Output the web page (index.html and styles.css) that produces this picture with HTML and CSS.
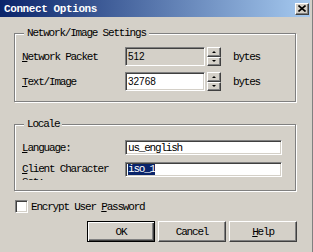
FILE: index.html
```html
<!DOCTYPE html>
<html lang="en">
<head>
  <meta charset="UTF-8" />
  <title>Connect Options</title>
  <link rel="stylesheet" href="styles.css">
</head>
<body>

  <div class="window">
    <div class="titlebar">
      <span class="title">Connect Options</span>
      <span class="close">
        <svg width="8" height="7" viewBox="0 0 8 7"><path d="M0.5 0.5 L7.5 6.5 M7.5 0.5 L0.5 6.5" stroke="#000" stroke-width="1.6" fill="none"/></svg>
      </span>
    </div>

    <div class="content">
      <!-- Network / image -->
      <div class="group net">
        <span class="legend">Network/Image Settings</span>
        <div class="row">
          <span class="label"><u>N</u>etwork Packet</span>
          <div class="field short readonly num">512</div>
          <div class="spin">
            <div class="spin-btn"><span class="arrow up"></span></div>
            <div class="spin-btn"><span class="arrow down"></span></div>
          </div>
          <span class="unit">bytes</span>
        </div>
        <div class="row">
          <span class="label"><u>T</u>ext/Image</span>
          <div class="field short num">32768</div>
          <div class="spin">
            <div class="spin-btn"><span class="arrow up"></span></div>
            <div class="spin-btn"><span class="arrow down"></span></div>
          </div>
          <span class="unit">bytes</span>
        </div>
      </div>

      <!-- Locale -->
      <div class="group locale">
        <span class="legend">Locale</span>
        <div class="row">
          <span class="label"><u>L</u>anguage:</span>
          <div class="field long">us_english</div>
        </div>
        <div class="row top">
          <span class="label wrap"><u>C</u>lient Character Set:</span>
          <div class="field long"><span class="sel">iso_1</span></div>
        </div>
      </div>

      <div class="check">
        <span class="box"></span>
        <span>Encrypt User <u>P</u>assword</span>
      </div>

      <div class="buttons">
        <a href="#" class="btn default">OK</a>
        <a href="#" class="btn">Cancel</a>
        <a href="#" class="btn"><u>H</u>elp</a>
      </div>
    </div>
  </div>

</body>
</html>
```

FILE: styles.css
```css
body {
  margin: 0;
  background: #d4d0c8;
  font-family: "Liberation Mono", monospace;
  font-size: 11px;
  letter-spacing: -1.2px;
  color: #000;
}

.window {
  width: 310px;
  height: 252px;
  border-right: 2px solid #d4d0c8;
  box-shadow: 1px 0 0 #808080;
}

.titlebar {
  height: 17px;
  background: linear-gradient(to right, #0a246a, #a6caf0);
  display: flex;
  align-items: center;
  justify-content: space-between;
  padding: 0 1px 0 4px;
}

.title {
  color: #fff;
  font-weight: bold;
  letter-spacing: -0.4px;
}

.close {
  box-sizing: border-box;
  width: 14px;
  height: 12px;
  background: #d4d0c8;
  border: 1px solid;
  border-color: #fff #404040 #404040 #fff;
  box-shadow: inset -1px -1px 0 #808080;
  display: flex;
  align-items: center;
  justify-content: center;
}

.content {
  padding: 16px 0 0 14px;
}

.group {
  position: relative;
  box-sizing: border-box;
  width: 282px;
  border: 1px solid #808080;
  box-shadow: inset 1px 1px 0 #fff, 1px 1px 0 #fff;
}

.net {
  height: 69px;
  padding: 13px 0 0 7px;
}

.locale {
  margin-top: 22px;
  height: 67px;
  padding: 15px 0 0 7px;
}

.legend {
  position: absolute;
  top: -7px;
  left: 9px;
  padding: 0 3px;
  line-height: 12px;
  background: #d4d0c8;
}

.row {
  display: flex;
  align-items: center;
  height: 19px;
}

.row + .row {
  margin-top: 6px;
}

.locale .row {
  height: 15px;
}

.locale .row + .row {
  margin-top: 7px;
}

.row.top {
  align-items: flex-start;
}

.label {
  width: 103px;
  flex-shrink: 0;
}

/* second line is clipped, as in the real dialog */
.label.wrap {
  margin-top: 1px;
  height: 17px;
  line-height: 13px;
  overflow: hidden;
}

.field {
  box-sizing: border-box;
  height: 19px;
  background: #fff;
  border: 1px solid;
  border-color: #808080 #fff #fff #808080;
  box-shadow: inset 1px 1px 0 #404040, inset -1px -1px 0 #d4d0c8;
  padding: 0 2px;
  display: flex;
  align-items: center;
}

.field.short {
  width: 80px;
}

.field.long {
  width: 157px;
  height: 15px;
}

.readonly {
  background: #d4d0c8;
}

.num {
  font-family: "Liberation Sans", Arial, sans-serif;
  font-size: 10px;
  letter-spacing: 0;
}

.sel {
  background: #0a246a;
  color: #fff;
  line-height: 11px;
}

.spin {
  margin-left: 2px;
  width: 14px;
  height: 19px;
  display: flex;
  flex-direction: column;
}

.spin-btn {
  flex: 1;
  box-sizing: border-box;
  border: 1px solid;
  border-color: #fff #404040 #404040 #fff;
  box-shadow: inset -1px -1px 0 #808080;
  display: flex;
  align-items: center;
  justify-content: center;
}

.arrow {
  width: 0;
  height: 0;
  border-left: 2px solid transparent;
  border-right: 2px solid transparent;
}

.arrow.up {
  border-bottom: 2px solid #000;
}

.arrow.down {
  border-top: 2px solid #000;
}

.unit {
  margin-left: 12px;
}

.check {
  display: flex;
  align-items: center;
  margin: 9px 0 0 1px;
  height: 13px;
}

.box {
  box-sizing: border-box;
  width: 13px;
  height: 13px;
  margin-right: 3px;
  background: #fff;
  border: 1px solid;
  border-color: #808080 #fff #fff #808080;
  box-shadow: inset 1px 1px 0 #404040, inset -1px -1px 0 #d4d0c8;
}

.buttons {
  display: flex;
  gap: 3px;
  margin-top: 8px;
  padding-left: 73px;
}

.btn {
  box-sizing: border-box;
  width: 68px;
  height: 21px;
  border: 1px solid;
  border-color: #fff #404040 #404040 #fff;
  box-shadow: inset -1px -1px 0 #808080;
  color: #000;
  text-decoration: none;
  display: flex;
  align-items: center;
  justify-content: center;
}

.btn.default {
  border-color: #000;
  box-shadow: inset 1px 1px 0 #fff, inset -1px -1px 0 #404040, inset -2px -2px 0 #808080;
}
```
